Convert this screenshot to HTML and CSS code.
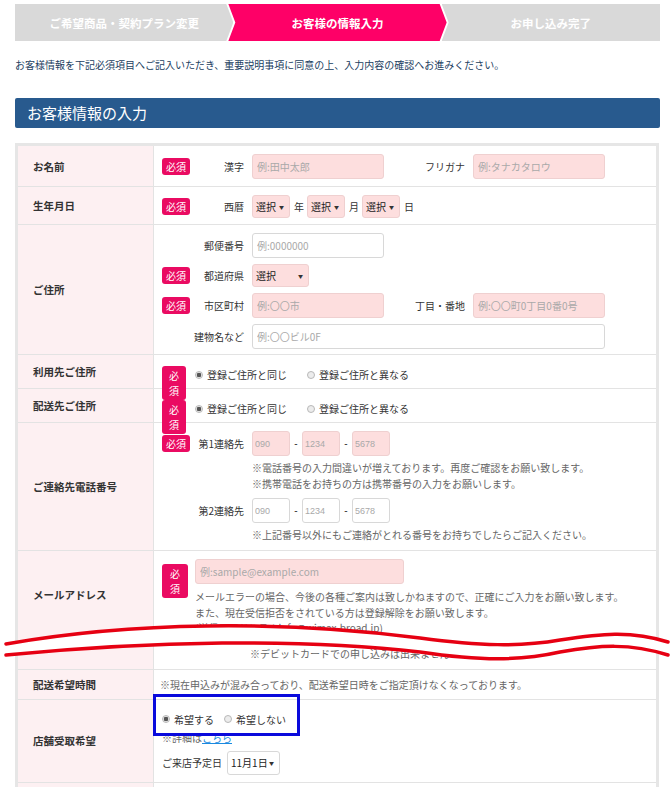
FILE: index.html
```html
<!DOCTYPE html>
<html lang="ja">
<head>
  <meta charset="UTF-8" />
  <meta name="viewport" content="width=device-width, initial-scale=1.0"/>
  <title>お客様情報の入力</title>
  <link rel="stylesheet" href="styles.css">
</head>
<body>

<div class="page">
  <ol class="steps">
    <li class="step step-first">ご希望商品・契約プラン変更</li>
    <li class="step step-mid current">お客様の情報入力</li>
    <li class="step step-last">お申し込み完了</li>
  </ol>

  <p class="lead">お客様情報を下記必須項目へご記入いただき、重要説明事項に同意の上、入力内容の確認へお進みください。</p>

  <h2 class="section-title">お客様情報の入力</h2>

  <table class="form-table">
    <tr class="row-name">
      <th>お名前</th>
      <td>
        <div class="line">
          <span class="req">必須</span>
          <span class="fl">漢字</span>
          <input class="inp pink w132" placeholder="例:田中太郎">
          <span class="fl2">フリガナ</span>
          <input class="inp pink w132" placeholder="例:タナカタロウ">
        </div>
      </td>
    </tr>
    <tr class="row-birth">
      <th>生年月日</th>
      <td>
        <div class="line">
          <span class="req">必須</span>
          <span class="fl">西暦</span>
          <span class="sel pink w38"><select><option>選択</option></select></span>
          <span class="unit">年</span>
          <span class="sel pink w38"><select><option>選択</option></select></span>
          <span class="unit">月</span>
          <span class="sel pink w38"><select><option>選択</option></select></span>
          <span class="unit">日</span>
        </div>
      </td>
    </tr>
    <tr class="row-address">
      <th>ご住所</th>
      <td>
        <div class="lines">
          <div class="line">
            <span class="slot"></span>
            <span class="fl">郵便番号</span>
            <input class="inp w132" placeholder="例:0000000">
          </div>
          <div class="line">
            <span class="req">必須</span>
            <span class="fl">都道府県</span>
            <span class="sel pink w57"><select><option>選択</option></select></span>
          </div>
          <div class="line">
            <span class="req">必須</span>
            <span class="fl">市区町村</span>
            <input class="inp pink w132" placeholder="例:〇〇市">
            <span class="fl2">丁目・番地</span>
            <input class="inp pink w132" placeholder="例:〇〇町0丁目0番0号">
          </div>
          <div class="line">
            <span class="slot"></span>
            <span class="fl">建物名など</span>
            <input class="inp w353" placeholder="例:〇〇ビル0F">
          </div>
        </div>
      </td>
    </tr>
    <tr class="row-radio">
      <th>利用先ご住所</th>
      <td>
        <div class="line top">
          <span class="req tall">必<br>須</span>
          <label class="radio"><input type="radio" name="use" checked>登録ご住所と同じ</label>
          <label class="radio"><input type="radio" name="use">登録ご住所と異なる</label>
        </div>
      </td>
    </tr>
    <tr class="row-radio row-ship">
      <th>配送先ご住所</th>
      <td>
        <div class="line top">
          <span class="req tall">必<br>須</span>
          <label class="radio"><input type="radio" name="ship" checked>登録ご住所と同じ</label>
          <label class="radio"><input type="radio" name="ship">登録ご住所と異なる</label>
        </div>
      </td>
    </tr>
    <tr class="row-tel">
      <th>ご連絡先電話番号</th>
      <td>
        <div class="line">
          <span class="req">必須</span>
          <span class="fl">第1連絡先</span>
          <input class="inp pink w38 num" placeholder="090">
          <span class="dash">-</span>
          <input class="inp pink w38 num" placeholder="1234">
          <span class="dash">-</span>
          <input class="inp pink w38 num" placeholder="5678">
        </div>
        <p class="note indent">※電話番号の入力間違いが増えております。再度ご確認をお願い致します。<br>※携帯電話をお持ちの方は携帯番号の入力をお願いします。</p>
        <div class="line second">
          <span class="slot"></span>
          <span class="fl">第2連絡先</span>
          <input class="inp w38 num" placeholder="090">
          <span class="dash">-</span>
          <input class="inp w38 num" placeholder="1234">
          <span class="dash">-</span>
          <input class="inp w38 num" placeholder="5678">
        </div>
        <p class="note indent">※上記番号以外にもご連絡がとれる番号をお持ちでしたらご記入ください。</p>
      </td>
    </tr>
    <tr class="row-mail">
      <th>メールアドレス</th>
      <td>
        <div class="line top">
          <span class="req tall mail">必<br>須</span>
          <div class="mail-body">
            <input class="inp pink w209" placeholder="例:sample@example.com">
            <p class="note">メールエラーの場合、今後の各種ご案内は致しかねますので、正確にご入力をお願い致します。<br>また、現在受信拒否をされている方は登録解除をお願い致します。<br>(送信元アドレス：info@wimax-broad.jp)</p>
          </div>
        </div>
        <p class="note debit">※デビットカードでの申し込みは出来ません</p>
      </td>
    </tr>
    <tr class="row-time">
      <th>配送希望時間</th>
      <td class="plain"><p class="note">※現在申込みが混み合っており、配送希望日時をご指定頂けなくなっております。</p></td>
    </tr>
    <tr class="row-store">
      <th>店舗受取希望</th>
      <td class="plain">
        <div class="radio-group marked">
          <label class="radio"><input type="radio" name="store" checked>希望する</label>
          <label class="radio"><input type="radio" name="store">希望しない</label>
        </div>
        <p class="note detail">※詳細は<a href="#">こちら</a></p>
        <div class="line visit">
          <span class="visit-label">ご来店予定日</span>
          <span class="sel w53"><select><option>11月1日</option></select></span>
        </div>
      </td>
    </tr>
    <tr class="row-more">
      <th></th>
      <td></td>
    </tr>
  </table>
</div>

<!-- break mark drawn over the page -->
<svg class="break" width="672" height="50" viewBox="0 620 672 50">
  <path fill="#fff" d="M6,644 C130,622 280,620 420,638 C480,646 520,647 560,640 C600,634 630,630 668,642 L672,642 L672,655 L668,655 C630,643 600,645 560,652 C520,661 480,661 420,652 C300,638 150,641 6,655 L0,655 L0,644 Z"/>
  <path fill="none" stroke="#e60012" stroke-width="3.5" stroke-linecap="round" d="M6,644 C130,622 280,620 420,638 C480,646 520,647 560,640 C600,634 630,630 668,642"/>
  <path fill="none" stroke="#e60012" stroke-width="3.5" stroke-linecap="round" d="M6,655 C150,641 300,638 420,652 C480,661 520,661 560,652 C600,645 630,643 668,655"/>
</svg>

</body>
</html>
```

FILE: styles.css
```css
body {
  margin: 0;
  font-family: "Noto Sans CJK JP", "Noto Sans", sans-serif;
  color: #333;
  background: #fff;
}

.page {
  width: 645px;
  margin-left: 15px;
  padding-top: 4px;
}

/* steps */
.steps {
  list-style: none;
  margin: 0;
  padding: 0;
  display: flex;
  height: 37px;
}

.step {
  flex: 1;
  display: flex;
  align-items: center;
  justify-content: center;
  background: #d9d9d9;
  color: #fff;
  font-weight: bold;
  font-size: 11.5px;
}

.step.current {
  background: #fe0067;
}

.step-first {
  clip-path: polygon(0 0, calc(100% - 7px) 0, 100% 50%, calc(100% - 7px) 100%, 0 100%);
}

.step-mid {
  margin-left: -5px;
  clip-path: polygon(0 0, calc(100% - 7px) 0, 100% 50%, calc(100% - 7px) 100%, 0 100%, 7px 50%);
}

.step-last {
  margin-left: -5px;
  clip-path: polygon(0 0, 100% 0, 100% 100%, 0 100%, 7px 50%);
}

.lead {
  margin: 17px 0 0;
  font-size: 10px;
  line-height: 14px;
  color: #22405f;
}

.section-title {
  margin: 26px 0 15px;
  height: 30px;
  padding-left: 12px;
  background: #285a8e;
  color: #fff;
  font-size: 15px;
  font-weight: normal;
  line-height: 30px;
  border-radius: 2px;
}

/* table */
.form-table {
  width: 644px;
  border: 3px solid #e6e6e6;
  border-spacing: 0;
  font-size: 10px;
}

.form-table th {
  width: 120px;
  padding: 0 0 0 15px;
  background: #fdf0f2;
  border-right: 1px solid #e3e3e3;
  border-bottom: 1px solid #e3e3e3;
  text-align: left;
  font-size: 10.5px;
  font-weight: bold;
  color: #333;
}

.form-table td {
  padding: 8px 8px 7px;
  border-bottom: 1px solid #e3e3e3;
  vertical-align: top;
}

.row-birth td {
  padding-bottom: 6px;
}

.row-address td {
  padding-bottom: 5px;
}

.line {
  display: flex;
  align-items: center;
}

.line.top {
  align-items: flex-start;
}

.lines {
  display: flex;
  flex-direction: column;
  gap: 6px;
}

.req {
  flex: none;
  width: 28px;
  height: 17px;
  background: #ea0b62;
  color: #fff;
  border-radius: 3px;
  font-size: 10px;
  line-height: 17px;
  text-align: center;
}

.req.tall {
  width: 24px;
  height: 34px;
  line-height: 15px;
  padding-top: 2px;
  box-sizing: border-box;
  margin-bottom: -17px;
}

.req.mail {
  width: 26px;
  margin: 5px 7px 0 0;
}

.slot {
  flex: none;
  width: 28px;
}

.fl {
  width: 54px;
  margin-right: 8px;
  text-align: right;
  color: #333;
}

.fl2 {
  width: 81px;
  margin-right: 8px;
  text-align: right;
  color: #333;
}

.inp {
  box-sizing: border-box;
  height: 25px;
  padding: 0 4px;
  border: 1px solid #d8d8d8;
  border-radius: 3px;
  background: #fff;
  font-family: inherit;
  font-size: 10px;
  color: #333;
  outline: none;
}

.inp::placeholder {
  color: #a9a9a9;
}

.pink {
  background: #fddede;
  border: 1px solid #efd0d0;
}

.num {
  padding: 0 2px;
  font-family: "Liberation Sans", Arial, sans-serif;
  font-size: 9px;
}

.w38 { width: 38px; }
.w53 { width: 53px; }
.w57 { width: 57px; }
.w132 { width: 132px; }
.w209 { width: 209px; }
.w353 { width: 353px; }

.sel {
  position: relative;
  box-sizing: border-box;
  height: 23px;
  border: 1px solid #d8d8d8;
  border-radius: 3px;
  display: inline-block;
}

.sel.pink {
  border-color: #efd0d0;
}

.sel select {
  appearance: none;
  -webkit-appearance: none;
  width: 100%;
  height: 100%;
  border: none;
  background: transparent;
  padding: 0 0 0 3px;
  font-family: inherit;
  font-size: 10px;
  color: #222;
  outline: none;
}

.sel::after {
  content: "▼";
  position: absolute;
  right: 5px;
  top: 8px;
  font-size: 5px;
  line-height: 5px;
  color: #333;
  pointer-events: none;
}

.unit {
  margin: 0 3px 0 4px;
}

.dash {
  width: 12px;
  text-align: center;
  font-family: "Liberation Sans", Arial, sans-serif;
}

/* radios */
.radio {
  display: inline-flex;
  align-items: center;
  line-height: 17px;
  color: #333;
}

.radio input {
  appearance: none;
  -webkit-appearance: none;
  width: 8px;
  height: 8px;
  margin: 0 4px 0 0;
  border: 1px solid #b8b8b8;
  border-radius: 50%;
  background: #ececec;
}

.radio input:checked {
  background: radial-gradient(circle, #555 0 2px, #ececec 2.6px);
}

.row-radio td {
  padding: 11px 8px 5px;
}

.row-radio .req {
  margin-right: 9px;
}

.row-radio .radio + .radio {
  margin-left: 20px;
}

/* notes */
.note {
  margin: 0;
  font-size: 10px;
  line-height: 16px;
  color: #666;
}

.indent {
  margin-top: 4px;
  padding-left: 90px;
}

.line.second {
  margin-top: 6px;
}

.row-tel td {
  padding-bottom: 7px;
}

.row-tel .note:last-child {
  margin-top: 4px;
}

.mail-body .note {
  margin-top: 5px;
  line-height: 15.5px;
}

.note.debit {
  margin-top: 10px;
  padding-left: 88px;
}

.row-mail td {
  padding-bottom: 7px;
}

.row-mail th {
  vertical-align: top;
  padding-top: 36px;
}

.form-table td.plain {
  padding: 7px 8px 6px 6px;
}

.row-store td.plain {
  padding: 11px 8px 7px 8px;
}

.radio-group {
  position: relative;
  display: inline-flex;
  line-height: 14px;
}

.radio-group .radio + .radio {
  margin-left: 10px;
}

/* highlight box over the store option */
.radio-group.marked::after {
  content: "";
  position: absolute;
  left: -9px;
  right: -14px;
  top: -17px;
  bottom: -8px;
  border: 3px solid #0a0adc;
}

.detail {
  margin-top: 3px;
  line-height: 14px;
}

.detail a {
  color: #1a8ae0;
  text-decoration: underline;
}

.visit {
  margin-top: 6px;
}

.visit-label {
  margin-right: 5px;
  color: #333;
}

.visit .sel {
  height: 24px;
}

.row-more th,
.row-more td {
  height: 40px;
  border-bottom: none;
}

.break {
  position: absolute;
  left: 0;
  top: 620px;
}
```
